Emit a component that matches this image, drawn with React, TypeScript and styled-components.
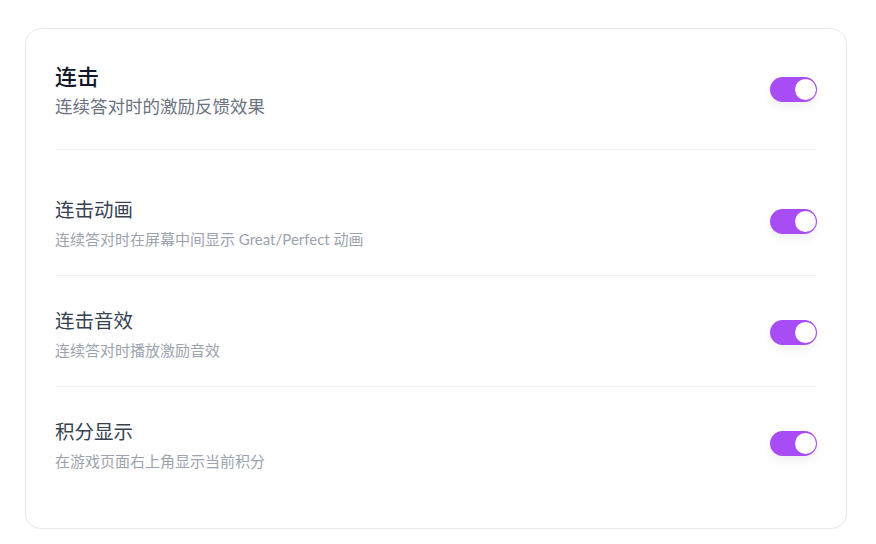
import { useState } from 'react';
import styled, { createGlobalStyle } from 'styled-components';

const GlobalStyle = createGlobalStyle`
  * { box-sizing: border-box; }
  body {
    margin: 0;
    background: #ffffff;
    font-family: Lato, "Noto Sans CJK SC", sans-serif;
  }
`;

type Item = { key: string; title: string; desc: string };

const items: Item[] = [
  { key: 'anim', title: '连击动画', desc: '连续答对时在屏幕中间显示 Great/Perfect 动画' },
  { key: 'sound', title: '连击音效', desc: '连续答对时播放激励音效' },
  { key: 'score', title: '积分显示', desc: '在游戏页面右上角显示当前积分' },
];

const Toggle = ({ on, onChange }: { on: boolean; onChange: () => void }) => (
  <Switch type="button" $on={on} onClick={onChange}>
    <Knob $on={on} />
  </Switch>
);

export const App = () => {
  const [combo, setCombo] = useState(true);
  const [flags, setFlags] = useState<Record<string, boolean>>({
    anim: true,
    sound: true,
    score: true,
  });

  return (
    <Page>
      <GlobalStyle />
      <Card>
        <Header>
          <TextBlock>
            <HeadTitle>连击</HeadTitle>
            <HeadDesc>连续答对时的激励反馈效果</HeadDesc>
          </TextBlock>
          <Toggle on={combo} onChange={() => setCombo(!combo)} />
        </Header>
        <List>
          {items.map((item) => (
            <Row key={item.key}>
              <TextBlock>
                <RowTitle>{item.title}</RowTitle>
                <RowDesc>{item.desc}</RowDesc>
              </TextBlock>
              <Toggle
                on={flags[item.key]}
                onChange={() => setFlags({ ...flags, [item.key]: !flags[item.key] })}
              />
            </Row>
          ))}
        </List>
      </Card>
    </Page>
  );
};
export default App;

const Page = styled.div`
  padding: 28px 29px 0 25px;
`;
const Card = styled.div`
  width: 822px;
  background: #ffffff;
  border: 1px solid #e8e9ec;
  border-radius: 16px;
  box-shadow: 0 1px 3px rgba(0, 0, 0, 0.04);
  padding: 33px 29px 31px;
`;
const Header = styled.div`
  display: flex;
  justify-content: space-between;
  align-items: center;
  padding-bottom: 29px;
  border-bottom: 1px solid #f0f1f3;
`;
const TextBlock = styled.div`
  display: flex;
  flex-direction: column;
`;
const HeadTitle = styled.div`
  font-size: 22px;
  line-height: 30px;
  font-weight: 500;
  color: #111827;
`;
const HeadDesc = styled.div`
  margin-top: 2px;
  font-size: 17.5px;
  line-height: 26px;
  color: #6b7280;
`;
const List = styled.div`
  margin-top: 15px;
  display: flex;
  flex-direction: column;
`;
const Row = styled.div`
  display: flex;
  justify-content: space-between;
  align-items: center;
  padding: 31px 0 25px;
  border-bottom: 1px solid #f0f1f3;
  &:last-child {
    border-bottom: none;
  }
`;
const RowTitle = styled.div`
  font-size: 19.5px;
  line-height: 28px;
  color: #374151;
`;
const RowDesc = styled.div`
  margin-top: 4px;
  font-size: 15px;
  line-height: 22px;
  color: #9ca3af;
`;
const Switch = styled.button<{ $on: boolean }>`
  position: relative;
  width: 47px;
  height: 25px;
  margin-bottom: 4px;
  padding: 0;
  border: none;
  border-radius: 13px;
  cursor: pointer;
  background: ${(p) => (p.$on ? '#a84cf6' : '#d1d5db')};
  box-shadow: 0 5px 10px rgba(0, 0, 0, 0.06);
`;
const Knob = styled.span<{ $on: boolean }>`
  position: absolute;
  top: 2px;
  left: ${(p) => (p.$on ? '25px' : '2px')};
  width: 21px;
  height: 21px;
  border-radius: 50%;
  background: #ffffff;
  transition: left 0.15s;
`;
